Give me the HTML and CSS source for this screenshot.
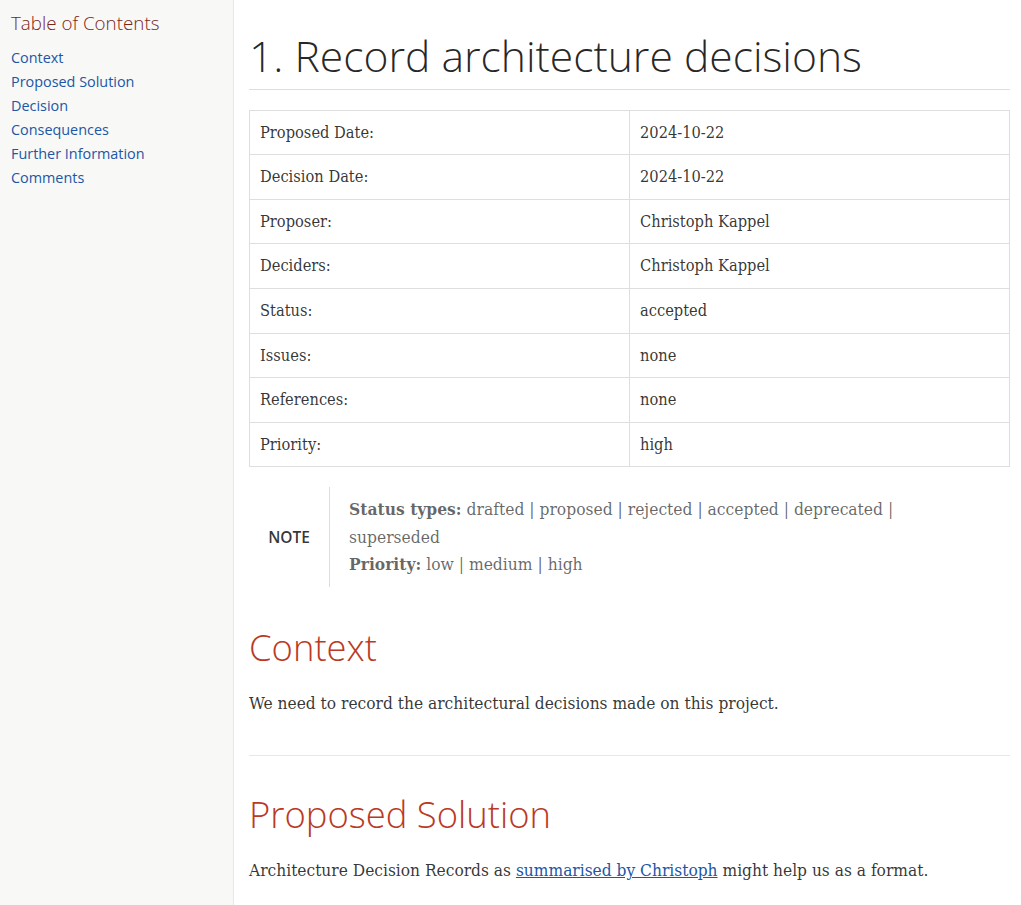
FILE: index.html
```html
<!DOCTYPE html>
<html lang="en">
<head>
<meta charset="utf-8">
<title>1. Record architecture decisions</title>
<link rel="stylesheet" href="styles.css">
</head>
<body>
<div class="page">
  <aside class="toc">
    <div class="toctitle">Table of Contents</div>
    <ul class="toclist">
      <li><a href="#context">Context</a></li>
      <li><a href="#proposed">Proposed Solution</a></li>
      <li><a href="#decision">Decision</a></li>
      <li><a href="#consequences">Consequences</a></li>
      <li><a href="#further">Further Information</a></li>
      <li><a href="#comments">Comments</a></li>
    </ul>
  </aside>
  <main class="main">
    <header class="header">
      <h1 class="title">1. Record architecture decisions</h1>
    </header>
    <table class="meta">
      <tbody>
        <tr><td>Proposed Date:</td><td>2024-10-22</td></tr>
        <tr><td>Decision Date:</td><td>2024-10-22</td></tr>
        <tr><td>Proposer:</td><td>Christoph Kappel</td></tr>
        <tr><td>Deciders:</td><td>Christoph Kappel</td></tr>
        <tr><td>Status:</td><td>accepted</td></tr>
        <tr><td>Issues:</td><td>none</td></tr>
        <tr><td>References:</td><td>none</td></tr>
        <tr><td>Priority:</td><td>high</td></tr>
      </tbody>
    </table>
    <div class="admonition">
      <div class="adm-icon"><span class="adm-label">Note</span></div>
      <div class="adm-content">
        <p><strong>Status types:</strong> drafted | proposed | rejected | accepted | deprecated |<br>superseded<br><strong>Priority:</strong> low | medium | high</p>
      </div>
    </div>
    <section class="sect" id="context">
      <h2>Context</h2>
      <p>We need to record the architectural decisions made on this project.</p>
    </section>
    <section class="sect sect-next" id="proposed">
      <h2>Proposed Solution</h2>
      <p>Architecture Decision Records as <a href="#">summarised by Christoph</a> might help us as a format.</p>
    </section>
  </main>
</div>
</body>
</html>
```
FILE: styles.css
```css
html, body {
  margin: 0;
  padding: 0;
  background: #fff;
}
body {
  font-family: "DejaVu Serif Condensed", "DejaVu Serif", "Liberation Serif", serif;
  font-stretch: condensed;
  color: rgba(0, 0, 0, 0.8);
  font-size: 16px;
}
.page {
  display: flex;
  min-height: 905px;
  align-items: stretch;
}
.toc {
  width: 222px;
  flex: 0 0 222px;
  background: #f8f8f7;
  border-right: 1px solid #e7e7e9;
  padding: 14px 0 0 11px;
  font-family: "Open Sans", "DejaVu Sans", sans-serif;
  font-stretch: normal;
}
.toctitle {
  color: #7a2518;
  font-size: 18.8px;
  font-weight: 300;
  line-height: 19.44px;
  margin: 0 0 14.8px 0;
}
.toclist {
  list-style: none;
  margin: 0;
  padding: 0;
  font-size: 14.4px;
}
.toclist li {
  line-height: 19.2px;
  margin-top: 4.8px;
}
.toclist a {
  color: #2156a5;
  text-decoration: none;
}
.main {
  flex: 1;
  padding: 0 11px 0 15px;
  min-width: 0;
}
.header {
  border-bottom: 1px solid #dddddf;
  padding-bottom: 11px;
}
.title {
  font-family: "Open Sans", "DejaVu Sans", sans-serif;
  font-stretch: normal;
  font-weight: 300;
  font-size: 42.6px;
  line-height: 44.55px;
  color: rgba(0, 0, 0, 0.85);
  margin: 33px 0 0 0;
}
.meta {
  width: 100%;
  border-collapse: collapse;
  margin-top: 20px;
  table-layout: fixed;
  border: 1px solid #dedede;
}
.meta td {
  border: 1px solid #dedede;
  padding: 9px 10px;
  font-size: 16.3px;
  line-height: 25.6px;
  color: rgba(0, 0, 0, 0.8);
  width: 50%;
}
.admonition {
  display: flex;
  margin-top: 20px;
  margin-bottom: 20px;
}
.adm-icon {
  flex: 0 0 80px;
  display: flex;
  align-items: center;
  justify-content: center;
}
.adm-label {
  font-family: "Open Sans", "DejaVu Sans", sans-serif;
  font-stretch: normal;
  font-weight: 600;
  font-size: 15.5px;
  text-transform: uppercase;
  color: rgba(0, 0, 0, 0.8);
}
.adm-content {
  flex: 1;
  border-left: 1px solid #dddddf;
  padding: 9px 20px 9px 19px;
  color: rgba(0, 0, 0, 0.6);
}
.adm-content p {
  margin: 0;
  font-size: 17.3px;
  line-height: 27.2px;
}
.adm-content strong {
  font-weight: bold;
}
.sect {
  padding-bottom: 20px;
}
.sect-next {
  border-top: 1px solid #e7e7e9;
}
.sect h2 {
  font-family: "Open Sans", "DejaVu Sans", sans-serif;
  font-stretch: normal;
  font-weight: 300;
  font-size: 36.4px;
  line-height: 37.46px;
  color: #ba3925;
  margin: 42px 0 24px 0;
}
.sect-next h2 {
  margin-top: 40px;
}
.sect p {
  font-size: 17.2px;
  line-height: 27.2px;
  margin: 0 0 17px 0;
}
.sect p a {
  color: #2156a5;
  text-decoration: underline;
}
```
